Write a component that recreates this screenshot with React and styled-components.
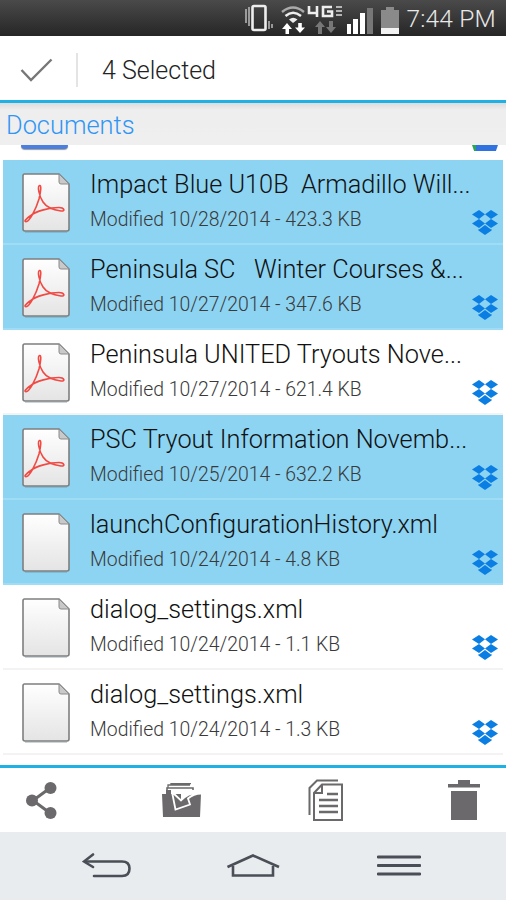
import React from 'react';
import styled, { createGlobalStyle } from 'styled-components';

const GlobalStyle = createGlobalStyle`
  html, body {
    margin: 0;
    padding: 0;
    background: #fff;
    font-family: Roboto, "Noto Sans", sans-serif;
  }
  * { box-sizing: border-box; }
`;

const colors = {
  accent: '#1fb0e4',
  selected: '#8dd4f2',
  label: '#2f96f5',
  icon: '#6b696b',
  nav: '#4a4e57',
};

const Screen = styled.div`
  width: 506px;
  height: 900px;
  display: flex;
  flex-direction: column;
  overflow: hidden;
  background: #fff;
`;

const StatusBar = styled.div`
  height: 36px;
  flex: none;
  display: flex;
  align-items: center;
  justify-content: flex-end;
  padding: 1px 10px 0 0;
  background: linear-gradient(#4a4a4a, #262626);
  color: #e8e8e8;
`;

const StatusIcon = styled.svg`
  flex: none;
  margin-right: ${p => p.$gap}px;
  display: block;
`;

const Clock = styled.span`
  font-size: 24.5px;
  font-weight: 300;
  letter-spacing: 0.2px;
  white-space: nowrap;
`;

const Toolbar = styled.div`
  height: 67px;
  flex: none;
  display: flex;
  align-items: center;
  border-bottom: 3px solid ${colors.accent};
  padding-top: 4px;
`;

const CheckSlot = styled.div`
  width: 78px;
  height: 34px;
  display: flex;
  align-items: center;
  padding-left: 20px;
  border-right: 2px solid #e4e4e4;
`;

const SelectedLabel = styled.span`
  margin-left: 24px;
  font-size: 25px;
  font-weight: 300;
  color: #222;
`;

const SectionHeader = styled.div`
  height: 42px;
  flex: none;
  display: flex;
  align-items: center;
  padding: 1px 0 0 6px;
  font-size: 25.4px;
  font-weight: 300;
  color: ${colors.label};
  background: linear-gradient(#dcdcdc 0, #eeeeee 7px, #efefef 100%);
`;

const ClippedRow = styled.div`
  height: 15px;
  flex: none;
  display: flex;
  align-items: flex-start;
  justify-content: space-between;
  padding: 0 8px 0 21px;
`;

const ClippedThumb = styled.div`
  width: 47px;
  height: 4px;
  border-radius: 0 0 5px 5px;
  background: #4a7fe0;
  box-shadow: 0 1px 1px #999;
`;

const ClippedBadge = styled.div`
  width: 26px;
  height: 6px;
  background: linear-gradient(90deg, #2aa65a 0 4px, #2f72e0 4px);
  clip-path: polygon(0 0, 100% 0, 92% 100%, 8% 100%);
`;

const List = styled.div`
  flex: none;
  display: flex;
  flex-direction: column;
`;

const Row = styled.div`
  height: 85px;
  display: flex;
  margin: 0 3px;
  padding: 0 5px 0 19px;
  background: ${p => (p.$selected ? colors.selected : '#fff')};
  border-bottom: 2px solid ${p => (p.$selected ? '#9fdcf5' : '#f3f3f3')};
`;

const FileThumb = styled.svg`
  flex: none;
  width: 48px;
  height: 60px;
  margin-top: 13px;
`;

const RowText = styled.div`
  flex: 1;
  min-width: 0;
  margin-left: 20px;
  padding-top: 10px;
`;

const Title = styled.div`
  font-size: 25.3px;
  font-weight: 300;
  line-height: 30px;
  color: #111;
  white-space: pre;
`;

const Meta = styled.div`
  margin-top: 8px;
  font-size: 19.4px;
  font-weight: 300;
  line-height: 24px;
  color: #3a3a3a;
  white-space: pre;
`;

const Badge = styled.svg`
  flex: none;
  align-self: flex-end;
  width: 26px;
  height: 25px;
  margin-bottom: 8px;
`;

const ActionBar = styled.div`
  margin-top: 10px;
  height: 67px;
  flex: none;
  display: flex;
  align-items: center;
  justify-content: space-between;
  padding: 0 26px;
  border-top: 3px solid ${colors.accent};
`;

const NavBar = styled.div`
  flex: 1;
  display: flex;
  align-items: center;
  gap: 96px;
  padding: 0 0 2px 82px;
  background: #e9ecef;
`;

const Glyph = styled.svg`
  flex: none;
  display: block;
`;

const PdfMark = () => (
  <path
    d="M3.5 48.5 C7 50 14 36 17 26 C19 18 19.5 12 17.5 12.5 C15.5 13 16.5 22 21 29 C25 35 32 37 39 38 C44 38.5 42 34.5 37 34.5 C28 34.5 14 38 8 43 C4 46 2 48 3.5 48.5 Z"
    fill="none"
    stroke="#f04a44"
    strokeWidth="1.6"
    strokeLinejoin="round"
  />
);

const FileIcon = ({ pdf }) => (
  <FileThumb viewBox="0 0 48 60">
    <defs>
      <linearGradient id="paper" x1="0" y1="0" x2="0" y2="1">
        <stop offset="0" stopColor="#ffffff" />
        <stop offset="1" stopColor="#e4e4e4" />
      </linearGradient>
    </defs>
    <path d="M2.5 1 H37 L47 11 V56 Q47 58 45 58 H3 Q1 58 1 56 V3 Q1 1 2.5 1 Z" fill="url(#paper)" stroke="#7f7f7f" strokeWidth="1.6" />
    <path d="M37 1 V9 Q37 11 39 11 H47 Z" fill="#c9c9c9" stroke="#8a8a8a" strokeWidth="1" />
    <path d="M3 59.2 H45" stroke="#6f8a96" strokeWidth="1" opacity="0.5" />
    {pdf && <PdfMark />}
  </FileThumb>
);

const Dropbox = () => (
  <Badge viewBox="0 0 26 25">
    <g fill="#0a7ee3">
      <polygon points="7,0 13,4.3 7,9 0,4.5" />
      <polygon points="19,0 26,4.5 19,9 13,4.3" />
      <polygon points="7,9 13,13.5 7,18 0,13.5" />
      <polygon points="19,9 26,13.5 19,18 13,13.5" />
      <polygon points="13,15 19,19.5 19.6,19 19.6,20.5 13,25 6.4,20.5 6.4,19 7,19.5" />
    </g>
  </Badge>
);

const StatusIcons = () => (
  <>
    <StatusIcon $gap={7} width="29" height="30" viewBox="0 0 29 30">
      <rect x="7.5" y="2" width="13" height="24" rx="1.5" fill="none" stroke="#eee" strokeWidth="2.6" />
      <path d="M1 5V19M4 3V22M24 17V25M27 20V24" stroke="#bbb" strokeWidth="1.5" />
    </StatusIcon>
    <StatusIcon $gap={1} width="25" height="30" viewBox="0 0 25 30">
      <path d="M1 8 Q12 -1 23 8" fill="none" stroke="#aaa" strokeWidth="2.4" />
      <path d="M4.5 12 Q12 5.5 20 12" fill="none" stroke="#eee" strokeWidth="2.4" />
      <path d="M8 15.5 Q12 12 16.5 15.5 L12 19 Z" fill="#eee" />
      <path d="M6 19 L1 25 H4.5 V30 H8 V25 H11 Z" fill="#fff" />
      <path d="M19 29 L24 23.5 H20.8 V19 H17.2 V23.5 H14 Z" fill="#fff" />
    </StatusIcon>
    <StatusIcon $gap={2} width="37" height="30" viewBox="0 0 37 30">
      <path d="M2 2 V9 H10 M10 2 V13" fill="none" stroke="#eee" strokeWidth="2.6" />
      <path d="M25 3 H16 V12 H25 V7.5 H20" fill="none" stroke="#eee" strokeWidth="2.6" />
      <path d="M29 3 H35 M29 7 H35 M29 11 H35" stroke="#ddd" strokeWidth="1.6" />
      <path d="M13 17 L8 23 H11 V30 H15 V23 H18 Z" fill="#777" />
      <path d="M24 29 L29 23 H26 V17 H22 V23 H19 Z" fill="#777" />
    </StatusIcon>
    <StatusIcon $gap={7} width="28" height="30" viewBox="0 0 28 30">
      <rect x="1" y="20" width="4" height="10" fill="#fff" />
      <rect x="7" y="15" width="5" height="15" fill="#fff" />
      <rect x="14" y="9" width="5" height="21" fill="#fff" />
      <rect x="21" y="4" width="6" height="26" fill="#777" />
    </StatusIcon>
    <StatusIcon $gap={7} width="18" height="30" viewBox="0 0 18 30">
      <rect x="5" y="3" width="8" height="3" fill="#8a8a8a" />
      <rect x="0" y="6" width="18" height="24" fill="#8a8a8a" />
      <rect x="0" y="24" width="18" height="6" fill="#f2f2f2" />
    </StatusIcon>
    <Clock>7:44 PM</Clock>
  </>
);

const files = [
  { title: 'Impact Blue U10B  Armadillo Will...', meta: 'Modified 10/28/2014 - 423.3 KB', pdf: true, selected: true },
  { title: 'Peninsula SC   Winter Courses &...', meta: 'Modified 10/27/2014 - 347.6 KB', pdf: true, selected: true },
  { title: 'Peninsula UNITED Tryouts Nove...', meta: 'Modified 10/27/2014 - 621.4 KB', pdf: true },
  { title: 'PSC Tryout Information Novemb...', meta: 'Modified 10/25/2014 - 632.2 KB', pdf: true, selected: true },
  { title: 'launchConfigurationHistory.xml', meta: 'Modified 10/24/2014 - 4.8 KB', selected: true },
  { title: 'dialog_settings.xml', meta: 'Modified 10/24/2014 - 1.1 KB' },
  { title: 'dialog_settings.xml', meta: 'Modified 10/24/2014 - 1.3 KB' },
];

const App = () => (
  <Screen>
    <GlobalStyle />
    <StatusBar>
      <StatusIcons />
    </StatusBar>
    <Toolbar>
      <CheckSlot>
        <Glyph width="33" height="24" viewBox="0 0 33 24">
          <path d="M1.5 12 L11 22 L31.5 1.5" fill="none" stroke="#777" strokeWidth="2.4" />
        </Glyph>
      </CheckSlot>
      <SelectedLabel>4 Selected</SelectedLabel>
    </Toolbar>
    <SectionHeader>Documents</SectionHeader>
    <ClippedRow>
      <ClippedThumb />
      <ClippedBadge />
    </ClippedRow>
    <List>
      {files.map((f, i) => (
        <Row key={i} $selected={f.selected}>
          <FileIcon pdf={f.pdf} />
          <RowText>
            <Title>{f.title}</Title>
            <Meta>{f.meta}</Meta>
          </RowText>
          <Dropbox />
        </Row>
      ))}
    </List>
    <ActionBar>
      <Glyph width="31" height="37" viewBox="0 0 31 37">
        <path d="M24 6 L7 18.5 L24 31" fill="none" stroke={colors.icon} strokeWidth="3" />
        <circle cx="24.5" cy="6" r="6" fill={colors.icon} />
        <circle cx="6" cy="18.5" r="6" fill={colors.icon} />
        <circle cx="24.5" cy="31" r="6" fill={colors.icon} />
      </Glyph>
      <Glyph width="40" height="35" viewBox="0 0 40 35">
        <path d="M6 5 V2 H28 M9 1.5 V0.6 H29" fill="none" stroke={colors.icon} strokeWidth="1.3" />
        <path d="M5 8 V5 H31 V8" fill="none" stroke={colors.icon} strokeWidth="1.6" />
        <path d="M0 11 H4 V7 H9 V11 H39 L38 34 H1 Z" fill={colors.icon} />
        <path d="M10 11 H40 V8 H10 Z" fill="#fff" />
        <path d="M19 18 C24 12 31 9 39.5 10.5 L39.5 7 H19 Z" fill="#fff" />
        <path d="M10 9 L13.5 26.5 L28 21.5 L26 15.5 C30 12 34 10.5 39 10.5 M10 9 L19 17.5 C24 12 31 9 39 10" fill="none" stroke="#fff" strokeWidth="1.8" />
      </Glyph>
      <Glyph width="35" height="42" viewBox="0 0 35 42">
        <path d="M30 1.5 H9 L1.5 9 V36" fill="none" stroke={colors.icon} strokeWidth="2" />
        <path d="M14 5.5 H34 V41 H6 V14 Z" fill="#fff" stroke={colors.icon} strokeWidth="2" />
        <path d="M14 5.5 V14 H6" fill="none" stroke={colors.icon} strokeWidth="2" />
        <path d="M19 15 H30 M11 21 H30 M11 27 H30 M11 33 H30" stroke={colors.icon} strokeWidth="2.6" />
      </Glyph>
      <Glyph width="32" height="40" viewBox="0 0 32 40">
        <path d="M10 0 H22 V4 H32 V7.5 H0 V4 H10 Z" fill={colors.icon} />
        <rect x="3" y="11" width="26" height="29" fill={colors.icon} />
      </Glyph>
    </ActionBar>
    <NavBar>
      <Glyph width="49" height="25" viewBox="0 0 49 25">
        <path d="M11 1.5 L2 8.5 L11 14" fill="none" stroke={colors.nav} strokeWidth="2.6" strokeLinecap="round" />
        <path d="M3 8.5 H40 Q47.5 8.5 47.5 15.5 Q47.5 23 40 23 H12" fill="none" stroke={colors.nav} strokeWidth="2.6" strokeLinecap="round" />
      </Glyph>
      <Glyph width="54" height="23" viewBox="0 0 54 23">
        <path d="M0.5 13 L26 1.5 L52 13" fill="none" stroke={colors.nav} strokeWidth="2.6" />
        <path d="M6 12 V21.5 H46 V12" fill="none" stroke={colors.nav} strokeWidth="2.6" />
      </Glyph>
      <Glyph width="44" height="21" viewBox="0 0 44 21">
        <path d="M1 2 H43 M1 10.5 H43 M1 19 H43" stroke={colors.nav} strokeWidth="2.8" strokeLinecap="round" />
      </Glyph>
    </NavBar>
  </Screen>
);

export default App;
